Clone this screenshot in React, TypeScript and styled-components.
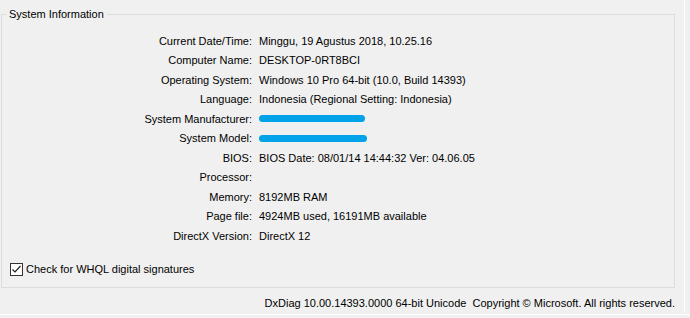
import React from 'react';
import styled, { createGlobalStyle } from 'styled-components';

interface InfoRow {
  label: string;
  value?: string;
  redacted?: number;
}

const rows: InfoRow[] = [
  { label: 'Current Date/Time:', value: 'Minggu, 19 Agustus 2018, 10.25.16' },
  { label: 'Computer Name:', value: 'DESKTOP-0RT8BCI' },
  { label: 'Operating System:', value: 'Windows 10 Pro 64-bit (10.0, Build 14393)' },
  { label: 'Language:', value: 'Indonesia (Regional Setting: Indonesia)' },
  { label: 'System Manufacturer:', redacted: 106 },
  { label: 'System Model:', redacted: 108 },
  { label: 'BIOS:', value: 'BIOS Date: 08/01/14 14:44:32 Ver: 04.06.05' },
  { label: 'Processor:', value: '' },
  { label: 'Memory:', value: '8192MB RAM' },
  { label: 'Page file:', value: '4924MB used, 16191MB available' },
  { label: 'DirectX Version:', value: 'DirectX 12' },
];

const App: React.FC = () => {
  return (
    <>
      <GlobalStyle />
      <Window>
        <Panel>
          <GroupBox>
            <GroupTitle>System Information</GroupTitle>
            <InfoGrid>
              {rows.map((row) => (
                <React.Fragment key={row.label}>
                  <Label>{row.label}</Label>
                  <Value>
                    {row.redacted ? <Scribble style={{ width: row.redacted }} /> : row.value}
                  </Value>
                </React.Fragment>
              ))}
            </InfoGrid>
            <CheckRow>
              <CheckBox>
                <svg width="11" height="11" viewBox="0 0 11 11">
                  <path d="M1.5 5.5 L4 8 L9.5 2" fill="none" stroke="#222" strokeWidth="1.2" />
                </svg>
              </CheckBox>
              Check for WHQL digital signatures
            </CheckRow>
          </GroupBox>
          <Footer>
            DxDiag 10.00.14393.0000 64-bit Unicode&nbsp;&nbsp;Copyright © Microsoft. All rights reserved.
          </Footer>
        </Panel>
        <WindowEdge />
      </Window>
    </>
  );
};

const GlobalStyle = createGlobalStyle`
  html, body {
    margin: 0;
    padding: 0;
    background: #f0f0f0;
  }
  body {
    font-family: "Liberation Sans", Arial, sans-serif;
    font-size: 11px;
    color: #000;
  }
`;
const Window = styled.div`
  width: 690px;
  height: 318px;
  display: flex;
  flex-direction: column;
  background: #f0f0f0;
  overflow: hidden;
`;
const Panel = styled.div`
  width: 685px;
  height: 313px;
  padding: 14px 0 0 1px;
  box-sizing: border-box;
  border-right: 1px solid #ffffff;
  display: flex;
  flex-direction: column;
`;
const GroupBox = styled.div`
  position: relative;
  width: 674px;
  height: 274px;
  box-sizing: border-box;
  border: 1px solid #dcdcdc;
  padding-top: 16px;
`;
const GroupTitle = styled.span`
  position: absolute;
  top: -9px;
  left: 4px;
  padding: 0 3px;
  background: #f0f0f0;
  line-height: 16px;
`;
const InfoGrid = styled.div`
  display: grid;
  grid-template-columns: 250px 1fr;
  grid-auto-rows: 19.5px;
  column-gap: 7px;
  align-items: center;
`;
const Label = styled.div`
  text-align: right;
  white-space: nowrap;
`;
const Value = styled.div`
  white-space: nowrap;
  display: flex;
  align-items: center;
`;
const Scribble = styled.span`
  display: inline-block;
  height: 7px;
  border-radius: 4px;
  background: #00a2e8;
`;
const CheckRow = styled.label`
  display: flex;
  align-items: center;
  gap: 3px;
  margin: 17px 0 0 8px;
`;
const CheckBox = styled.span`
  width: 13px;
  height: 13px;
  box-sizing: border-box;
  border: 1px solid #333;
  background: #fff;
  display: flex;
  align-items: center;
  justify-content: center;
`;
const Footer = styled.div`
  width: 674px;
  text-align: right;
  margin-top: 8px;
  line-height: 14px;
  white-space: nowrap;
`;
const WindowEdge = styled.div`
  width: 690px;
  height: 1px;
  margin-top: 1px;
  background: #ffffff;
`;

export default App;
